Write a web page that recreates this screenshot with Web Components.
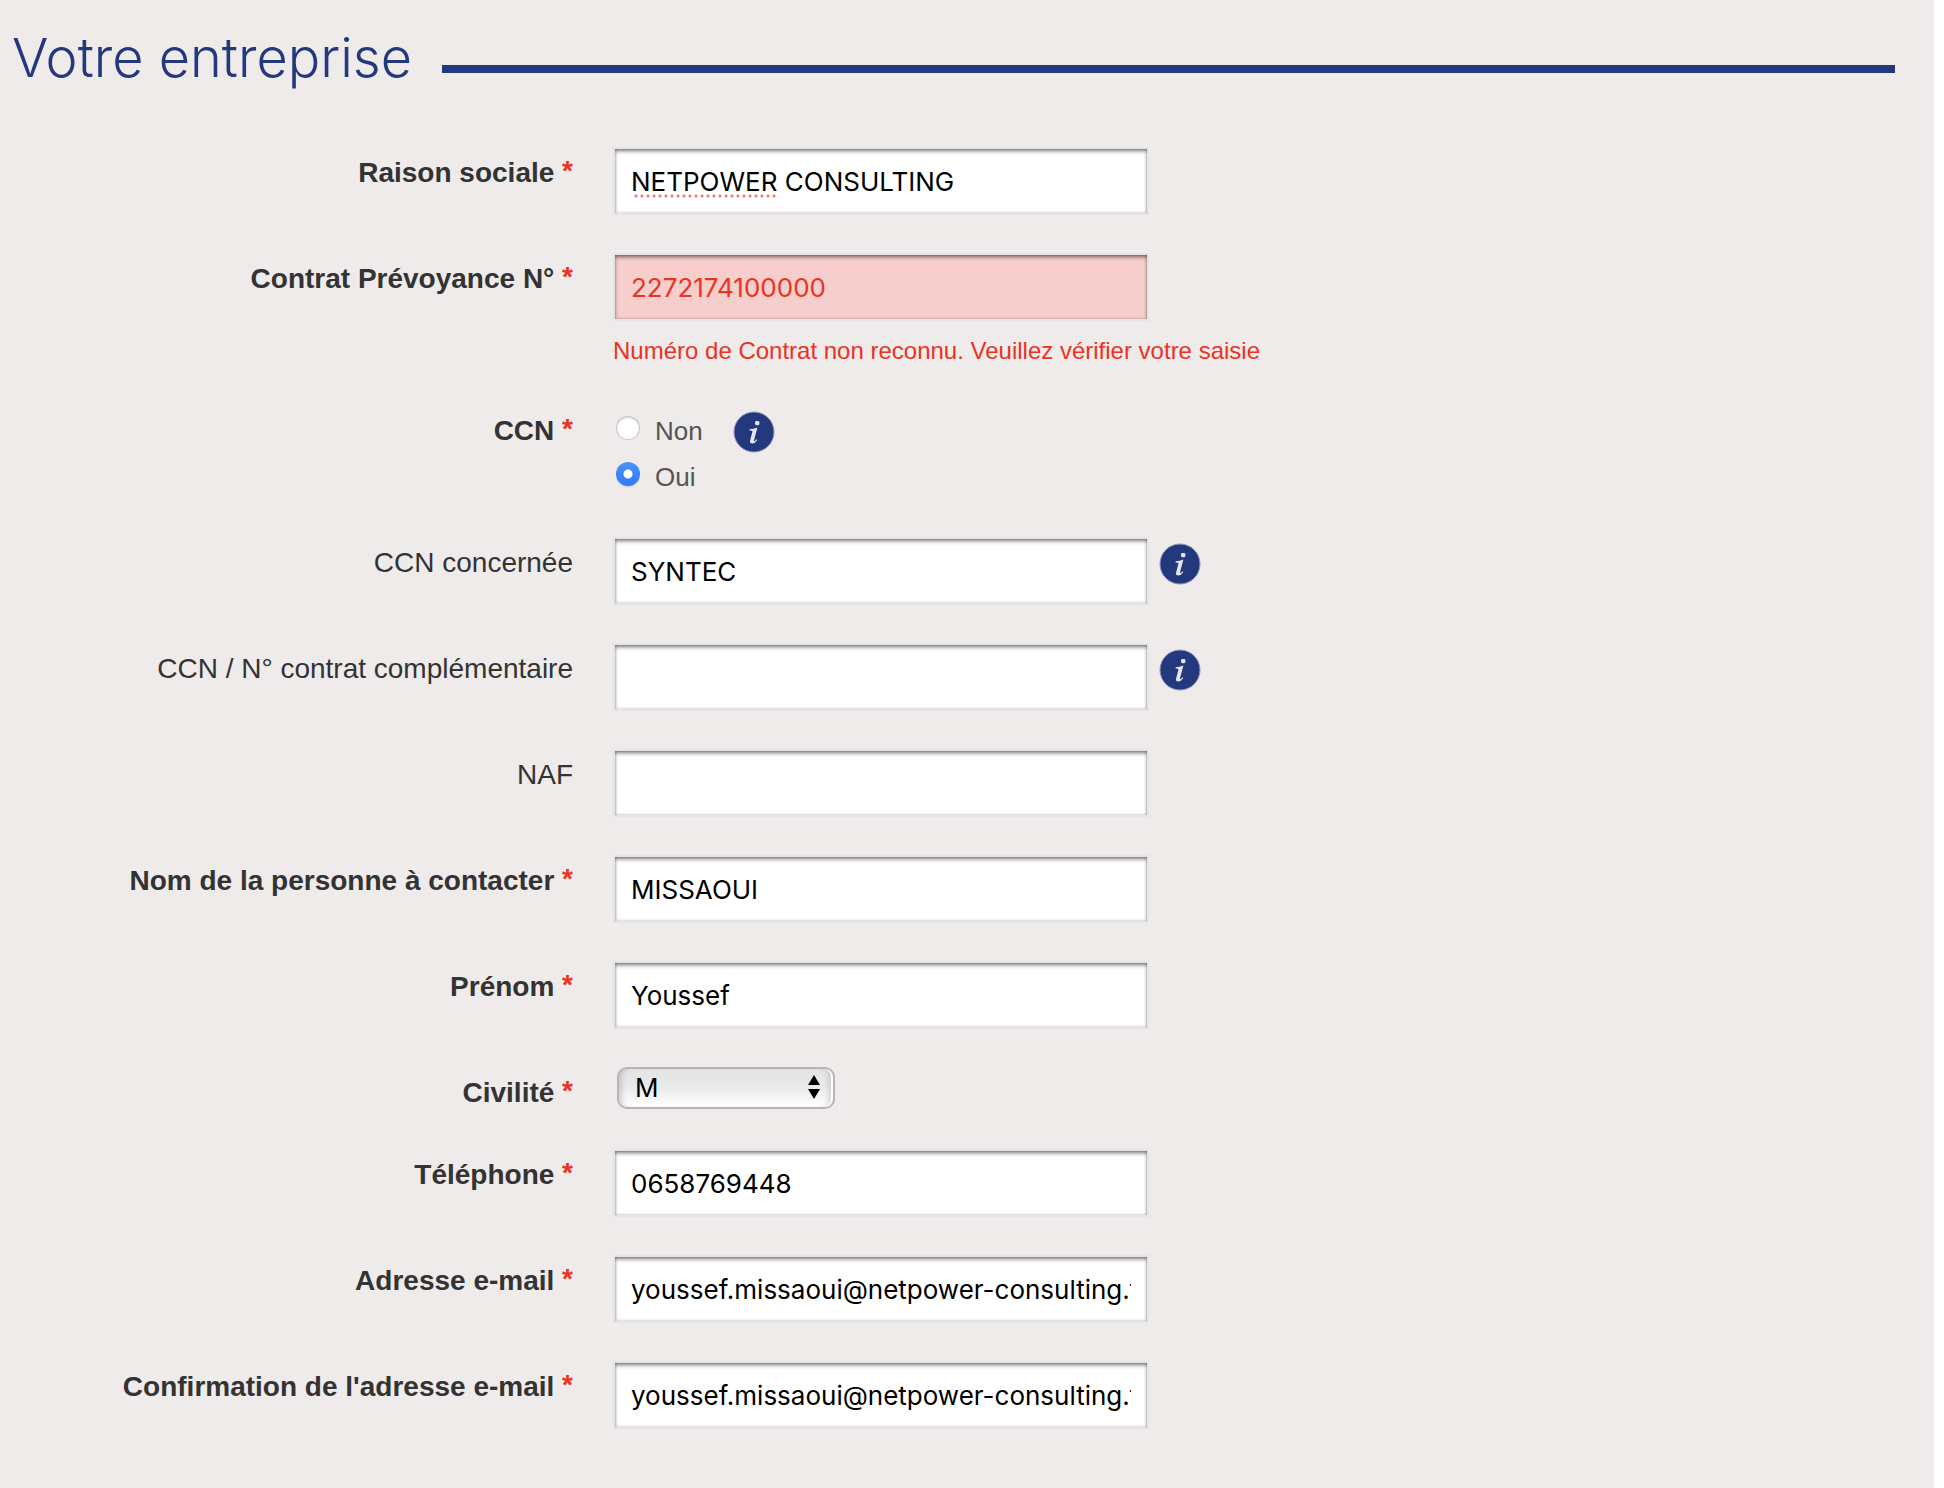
<!DOCTYPE html>
<html lang="fr">
<head>
<meta charset="utf-8">
<title>Votre entreprise</title>
<meta name="viewport" content="width=device-width, initial-scale=1">
<style>
    :root {
        --navy: #23387d;
        --red: #ea3323;
        --page: #eeebea;
    }
    html {
        background: #fff;
    }
    body {
        margin: 0 10px 0 0;
        min-height: 100vh;
        background: var(--page);
        color: #333;
        font-family: "Liberation Sans", Arial, sans-serif;
        font-size: 28px;
        line-height: 32px;
    }
    form {
        padding: 24px 0 48px;
    }
</style>
</head>
<body>
<form>
    <section-title>Votre entreprise</section-title>
    <form-fields></form-fields>
</form>

<script>
// --- Data for the form ---
const fields = [
    { label: 'Raison sociale', name: 'raison', value: 'NETPOWER CONSULTING', required: true, misspelt: true },
    { label: 'Contrat Prévoyance N°', name: 'contrat', value: '2272174100000', required: true, error: 'Numéro de Contrat non reconnu. Veuillez vérifier votre saisie' },
    { label: 'CCN', name: 'ccn', kind: 'radio', options: ['Non', 'Oui'], value: 'Oui', required: true, info: true },
    { label: 'CCN concernée', name: 'ccn-nom', value: 'SYNTEC', info: true },
    { label: 'CCN / N° contrat complémentaire', name: 'ccn-compl', value: '', info: true },
    { label: 'NAF', name: 'naf', value: '' },
    { label: 'Nom de la personne à contacter', name: 'nom', value: 'MISSAOUI', required: true },
    { label: 'Prénom', name: 'prenom', value: 'Youssef', required: true },
    { label: 'Civilité', name: 'civilite', kind: 'select', options: ['M', 'Mme'], value: 'M', required: true },
    { label: 'Téléphone', name: 'tel', type: 'tel', value: '0658769448', required: true },
    { label: 'Adresse e-mail', name: 'email', type: 'email', value: 'youssef.missaoui@netpower-consulting.fr', required: true },
    { label: "Confirmation de l'adresse e-mail", name: 'email2', type: 'email', value: 'youssef.missaoui@netpower-consulting.fr', required: true }
];

// --- Web Component: SectionTitle ---
class SectionTitle extends HTMLElement {
    constructor() {
        super();
        this.attachShadow({ mode: 'open' });
        this.shadowRoot.innerHTML = `
            <style>
                :host {
                    display: flex;
                    align-items: center;
                    gap: 30px;
                    padding: 0 39px 0 12px;
                    color: var(--navy);
                }
                h2 {
                    margin: 0;
                    font-family: Inter, sans-serif;
                    font-size: 54px;
                    font-weight: 300;
                    line-height: 68px;
                }
                .line {
                    flex: 1;
                    height: 8px;
                    margin-top: 22px;
                    background: currentColor;
                }
            </style>
            <h2><slot></slot></h2>
            <span class="line"></span>
        `;
    }
}
customElements.define('section-title', SectionTitle);


// --- Web Component: InfoButton ---
class InfoButton extends HTMLElement {
    constructor() {
        super();
        this.attachShadow({ mode: 'open' });
        this.shadowRoot.innerHTML = `
            <style>
                :host {
                    display: block;
                }
                button {
                    display: block;
                    padding: 0;
                    border: 0;
                    background: none;
                    cursor: pointer;
                }
                svg {
                    display: block;
                }
            </style>
            <button type="button" aria-label="Aide">
                <svg width="42" height="42" viewBox="0 0 42 42">
                    <circle cx="21" cy="21" r="20" fill="#23387d" stroke="#8d97bb"/>
                    <g fill="#e4e7f0">
                        <rect x="22" y="10" width="4.400" height="4.200" rx="1.400"/>
                        <path d="M16.600 18.200q4-.2 7.800-1.700l-3.300 12.600q-.3 1.300.5 1.100.7-.2 1.900-1.900l.9.600q-2.400 3.500-5.100 3.500-2.900 0-2.200-2.900l2.300-8.700q.3-1.400-2.800-1.400z"/>
                    </g>
                </svg>
            </button>
        `;
    }
}
customElements.define('info-button', InfoButton);


// --- Web Component: TextField ---
class TextField extends HTMLElement {
    constructor() {
        super();
        this.attachShadow({ mode: 'open' });
    }

    set field(field) {
        this.shadowRoot.innerHTML = `
            <style>
                :host {
                    display: block;
                }
                .box {
                    position: relative;
                    width: 536px;
                }
                input {
                    display: block;
                    box-sizing: border-box;
                    width: 100%;
                    height: 68px;
                    padding: 0 16px;
                    border: 2px solid #e4e4e4;
                    border-radius: 0;
                    outline: 0;
                    background: #fff;
                    box-shadow: inset 0 3px 4px -1px rgba(0, 0, 0, .5), inset 0 0 3px rgba(0, 0, 0, .3);
                    color: #000;
                    font-family: Inter, sans-serif;
                    font-size: 26px;
                }
                input.invalid {
                    background: #f6cecc;
                    color: var(--red);
                }
                .spelling {
                    position: absolute;
                    top: 47px;
                    left: 20px;
                    width: 144px;
                    height: 4px;
                    background: radial-gradient(circle, #f07a70 1px, #f07a7000 2px) 0 0 / 6px 4px repeat-x;
                }
                p {
                    margin: 16px 0 0;
                    color: var(--red);
                    font-size: 24px;
                    line-height: 28px;
                }
            </style>
            <div class="box">
                <input type="${field.type || 'text'}" name="${field.name}" value="${field.value}"
                    aria-label="${field.label}" spellcheck="false" class="${field.error ? 'invalid' : ''}">
                ${field.misspelt ? '<span class="spelling"></span>' : ''}
            </div>
            ${field.error ? `<p>${field.error}</p>` : ''}
        `;
    }
}
customElements.define('text-field', TextField);


// --- Web Component: RadioField ---
class RadioField extends HTMLElement {
    constructor() {
        super();
        this.attachShadow({ mode: 'open' });
    }

    set field(field) {
        this.shadowRoot.innerHTML = `
            <style>
                :host {
                    display: flex;
                    flex-direction: column;
                    gap: 16px;
                    padding: 13px 0 7px 3px;
                    color: #555;
                    font-size: 26px;
                    line-height: 30px;
                }
                label {
                    display: flex;
                    gap: 15px;
                }
                input {
                    appearance: none;
                    width: 24px;
                    height: 24px;
                    margin: 0;
                    border-radius: 50%;
                    background: #fff;
                    box-shadow: inset 0 0 0 1px #c6c6c6, inset 0 2px 2px rgba(0, 0, 0, .15);
                }
                input:checked {
                    background: radial-gradient(circle, #fff 4px, #fff0 5px), linear-gradient(#4a95fb, #2f79f6);
                    box-shadow: 0 1px 1px rgba(0, 0, 0, .15);
                }
            </style>
            ${field.options.map(option => `
                <label>
                    <input type="radio" name="${field.name}" value="${option}" ${option === field.value ? 'checked' : ''}>
                    ${option}
                </label>
            `).join('')}
        `;
    }
}
customElements.define('radio-field', RadioField);


// --- Web Component: SelectField ---
class SelectField extends HTMLElement {
    constructor() {
        super();
        this.attachShadow({ mode: 'open' });
    }

    set field(field) {
        this.shadowRoot.innerHTML = `
            <style>
                :host {
                    display: block;
                    padding: 0 0 2px 4px;
                }
                .box {
                    position: relative;
                    width: 218px;
                }
                select {
                    appearance: none;
                    display: block;
                    box-sizing: border-box;
                    width: 100%;
                    height: 42px;
                    padding: 0 40px 2px 16px;
                    border: 2px solid #b5b5b5;
                    border-radius: 10px;
                    outline: 0;
                    background: linear-gradient(#e4e4e4, #e9e9e9 45%, #fff);
                    box-shadow: inset 6px 0 6px -4px rgba(0, 0, 0, .18), inset -2px 0 #fff, inset -8px 0 6px -4px rgba(0, 0, 0, .14);
                    color: #000;
                    font-family: Inter, sans-serif;
                    font-size: 26px;
                }
                svg {
                    position: absolute;
                    top: 8px;
                    right: 15px;
                    pointer-events: none;
                }
            </style>
            <div class="box">
                <select name="${field.name}" aria-label="${field.label}">
                    ${field.options.map(option => `<option>${option}</option>`).join('')}
                </select>
                <svg width="12" height="24" viewBox="0 0 12 24"><path d="M6 0l6 10H0zM6 24l6-10H0z"/></svg>
            </div>
        `;
    }
}
customElements.define('select-field', SelectField);


// --- Web Component: FormRow ---
class FormRow extends HTMLElement {
    constructor() {
        super();
        this.attachShadow({ mode: 'open' });
        this.shadowRoot.innerHTML = `
            <style>
                :host {
                    display: grid;
                    grid-template-columns: 573px 1fr;
                    column-gap: 40px;
                }
                .label {
                    padding-top: 10px;
                    text-align: right;
                }
                :host([required]) .label {
                    font-weight: bold;
                }
                :host([required]) .label::after {
                    content: " *";
                    color: var(--red);
                    line-height: 0;
                    vertical-align: 2px;
                }
                :host([kind="radio"]) .label {
                    padding-top: 12px;
                }
                .control {
                    display: flex;
                    gap: 10px;
                }
                ::slotted(info-button) {
                    margin-top: 6px;
                }
                :host([kind="radio"]) .control {
                    gap: 30px;
                }
                :host([kind="radio"]) ::slotted(info-button) {
                    margin-top: 8px;
                }
            </style>
            <label class="label"><slot name="label"></slot></label>
            <div class="control"><slot></slot></div>
        `;
        // The label and its control sit in different shadow roots, so pass the click on
        this.shadowRoot.querySelector('.label').addEventListener('click', () => {
            const control = this.querySelector('text-field, radio-field, select-field');
            control.shadowRoot.querySelector('input, select').focus();
        });
    }
}
customElements.define('form-row', FormRow);


// --- Web Component: FormFields ---
class FormFields extends HTMLElement {
    constructor() {
        super();
        this.attachShadow({ mode: 'open' });
        this.shadowRoot.innerHTML = `
            <style>
                :host {
                    display: flex;
                    flex-direction: column;
                    gap: 38px;
                    padding-top: 55px;
                }
            </style>
        `;
        fields.forEach(field => {
            const kind = field.kind || 'text';
            const row = document.createElement('form-row');
            row.setAttribute('kind', kind);
            row.toggleAttribute('required', !!field.required);

            const label = document.createElement('span');
            label.slot = 'label';
            label.textContent = field.label;

            const control = document.createElement(`${kind}-field`);
            control.field = field;

            row.append(label, control);
            if (field.info) {
                row.append(document.createElement('info-button'));
            }
            this.shadowRoot.appendChild(row);
        });
    }
}
customElements.define('form-fields', FormFields);
</script>
</body>
</html>
